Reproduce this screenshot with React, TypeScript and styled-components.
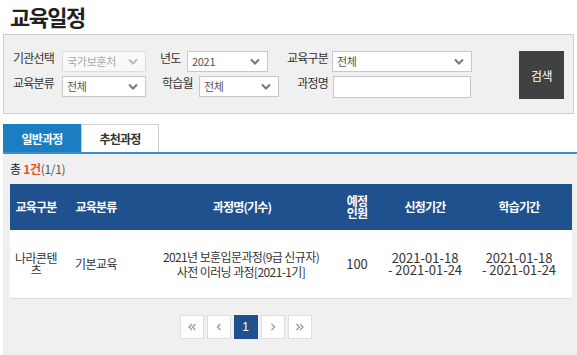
import React from "react";
import styled, { createGlobalStyle } from "styled-components";

const Global = createGlobalStyle`
  html, body { margin: 0; padding: 0; background: #fff; overflow: hidden; }
  body { font-family: "Noto Sans CJK KR", "Noto Sans", sans-serif; color: #333; }
  * { box-sizing: border-box; }
`;

const Page = styled.div`
  padding-left: 3px;
  width: 577px;
`;

const Title = styled.h1`
  margin: 0;
  padding: 2px 0 0 7px;
  height: 34px;
  font-size: 22px;
  line-height: 28px;
  font-weight: 700;
  letter-spacing: -1.6px;
  color: #222;
`;

const Panel = styled.div`
  display: flex;
  align-items: flex-start;
  justify-content: space-between;
  width: 571px;
  height: 80px;
  border: 1px solid #cfcfcf;
  background: #f0f0f0;
  padding: 16px 9px 0 9px;
`;

const Form = styled.div`
  display: flex;
  flex-direction: column;
  gap: 4px;
`;

const FormRow = styled.div`
  display: grid;
  grid-template-columns: 147px 123px auto;
  align-items: start;
`;

const Field = styled.div<{ $shift?: number; $gap?: number }>`
  display: flex;
  align-items: flex-start;
  gap: ${(p) => p.$gap ?? 5}px;
  padding-left: ${(p) => p.$shift ?? 0}px;
`;

const Label = styled.span<{ $w?: number; $right?: boolean }>`
  display: block;
  font-size: 12px;
  letter-spacing: -0.8px;
  line-height: 14px;
  color: #333;
  white-space: nowrap;
  ${(p) => (p.$w ? `width: ${p.$w}px;` : "")}
  text-align: ${(p) => (p.$right ? "right" : "left")};
`;

const SelectBox = styled.div<{ $w: number; $disabled?: boolean }>`
  width: ${(p) => p.$w}px;
  height: 21px;
  border: 1px solid ${(p) => (p.$disabled ? "#dcdcdc" : "#c8c8c8")};
  background: ${(p) => (p.$disabled ? "#f9f9f9" : "#fff")};
  color: ${(p) => (p.$disabled ? "#aaa" : "#555")};
  font-size: 11px;
  line-height: 19px;
  padding-left: 4px;
  display: flex;
  align-items: center;
  justify-content: space-between;
  padding-right: 7px;
  letter-spacing: -0.3px;
`;

const Chevron = styled.svg<{ $disabled?: boolean }>`
  width: 10px;
  height: 7px;
  stroke: ${(p) => (p.$disabled ? "#bbb" : "#777")};
  fill: none;
  stroke-width: 2;
`;

const TextInput = styled.div`
  width: 138px;
  height: 22px;
  border: 1px solid #c8c8c8;
  background: #fff;
`;

const SearchButton = styled.button`
  width: 45px;
  height: 48px;
  border: none;
  background: #414141;
  color: #fff;
  font-family: inherit;
  font-size: 12px;
  letter-spacing: -0.5px;
  padding: 0;
`;

const Tabs = styled.div`
  display: flex;
  margin-top: 10px;
  height: 30px;
  border-bottom: 2px solid #3a8ecb;
  width: 574px;
`;

const Tab = styled.div<{ $active?: boolean }>`
  width: 78px;
  height: 28px;
  display: flex;
  align-items: center;
  justify-content: center;
  font-size: 12px;
  font-weight: 700;
  letter-spacing: -0.8px;
  background: ${(p) => (p.$active ? "#1b7ec2" : "#fff")};
  color: ${(p) => (p.$active ? "#fff" : "#333")};
  border: ${(p) => (p.$active ? "none" : "1px solid #cfcfcf")};
  border-bottom: none;
`;

const Content = styled.div`
  background: #f0f0f0;
  width: 574px;
  height: 201px;
  padding: 6px 5px 0 7px;
`;

const Total = styled.div`
  font-size: 12px;
  line-height: 18px;
  height: 24px;
  letter-spacing: -0.3px;
  color: #555;
`;

const Strong = styled.strong`
  color: #e8531f;
  font-weight: 700;
`;

const Dark = styled.span`
  color: #222;
`;

const Table = styled.table`
  width: 562px;
  border-collapse: collapse;
  table-layout: fixed;
  background: #fff;
`;

const Th = styled.th<{ $w: number; $pl?: number }>`
  width: ${(p) => p.$w}px;
  height: 46px;
  background: #20518f;
  color: #fff;
  font-size: 12px;
  font-weight: 700;
  letter-spacing: -0.8px;
  line-height: 12px;
  text-align: center;
  padding: 0 0 0 ${(p) => p.$pl ?? 0}px;
`;

const Td = styled.td<{ $pl?: number; $num?: boolean; $lh?: number }>`
  height: 68px;
  text-align: center;
  vertical-align: middle;
  font-size: ${(p) => (p.$num ? 13 : 12)}px;
  line-height: ${(p) => p.$lh ?? 15}px;
  color: #333;
  letter-spacing: ${(p) => (p.$num ? "0" : "-0.6px")};
  padding: 0 2px 0 ${(p) => p.$pl ?? 2}px;
  border-bottom: 1px solid #dcdcdc;
`;

const Pager = styled.div`
  width: 471px;
  display: flex;
  justify-content: center;
  gap: 3px;
  margin-top: 16px;
`;

const PageBtn = styled.div<{ $active?: boolean }>`
  width: 24px;
  height: 24px;
  display: flex;
  align-items: center;
  justify-content: center;
  background: ${(p) => (p.$active ? "#20518f" : "#fff")};
  border: 1px solid ${(p) => (p.$active ? "#20518f" : "#dedede")};
  color: ${(p) => (p.$active ? "#fff" : "#888")};
  font-size: 12px;
  font-family: "Liberation Sans", sans-serif;
`;

const PagerIcon = styled.svg`
  width: 10px;
  height: 10px;
  fill: none;
  stroke: #999;
  stroke-width: 1.3;
`;

function Select({ w, value, disabled }: { w: number; value: string; disabled?: boolean }) {
  return (
    <SelectBox $w={w} $disabled={disabled}>
      <span>{value}</span>
      <Chevron $disabled={disabled} viewBox="0 0 10 7">
        <polyline points="1,1.5 5,5.5 9,1.5" />
      </Chevron>
    </SelectBox>
  );
}

export default function App() {
  return (
    <Page>
      <Global />
      <Title>교육일정</Title>
      <Panel>
        <Form>
          <FormRow>
            <Field>
              <Label $w={44}>기관선택</Label>
              <Select w={84} value="국가보훈처" disabled />
            </Field>
            <Field>
              <Label $w={22}>년도</Label>
              <Select w={81} value="2021" />
            </Field>
            <Field $gap={4}>
              <Label $w={45} $right>
                교육구분
              </Label>
              <Select w={140} value="전체" />
            </Field>
          </FormRow>
          <FormRow>
            <Field>
              <Label $w={44}>교육분류</Label>
              <Select w={84} value="전체" />
            </Field>
            <Field $shift={2} $gap={4}>
              <Label $w={33}>학습월</Label>
              <Select w={80} value="전체" />
            </Field>
            <Field $gap={5}>
              <Label $w={45} $right>
                과정명
              </Label>
              <TextInput />
            </Field>
          </FormRow>
        </Form>
        <SearchButton>검색</SearchButton>
      </Panel>
      <Tabs>
        <Tab $active>일반과정</Tab>
        <Tab>추천과정</Tab>
      </Tabs>
      <Content>
        <Total>
          <Dark>총 </Dark>
          <Strong>1건</Strong>(1/1)
        </Total>
        <Table>
          <thead>
            <tr>
              <Th $w={52}>교육구분</Th>
              <Th $w={68}>교육분류</Th>
              <Th $w={200} $pl={24}>
                과정명(기수)
              </Th>
              <Th $w={54}>
                예정
                <br />
                인원
              </Th>
              <Th $w={82}>신청기간</Th>
              <Th $w={106}>학습기간</Th>
            </tr>
          </thead>
          <tbody>
            <tr>
              <Td $lh={12}>나라콘텐츠</Td>
              <Td>기본교육</Td>
              <Td $pl={24}>
                2021년 보훈입문과정(9급 신규자)
                <br />
                사전 이러닝 과정[2021-1기]
              </Td>
              <Td $num>100</Td>
              <Td $num $lh={12}>
                2021-01-18
                <br />- 2021-01-24
              </Td>
              <Td $num $lh={12}>
                2021-01-18
                <br />- 2021-01-24
              </Td>
            </tr>
          </tbody>
        </Table>
        <Pager>
          <PageBtn>
            <PagerIcon viewBox="0 0 10 10">
              <polyline points="5,2 2,5 5,8" />
              <polyline points="8.5,2 5.5,5 8.5,8" />
            </PagerIcon>
          </PageBtn>
          <PageBtn>
            <PagerIcon viewBox="0 0 10 10">
              <polyline points="6.5,2 3.5,5 6.5,8" />
            </PagerIcon>
          </PageBtn>
          <PageBtn $active>1</PageBtn>
          <PageBtn>
            <PagerIcon viewBox="0 0 10 10">
              <polyline points="3.5,2 6.5,5 3.5,8" />
            </PagerIcon>
          </PageBtn>
          <PageBtn>
            <PagerIcon viewBox="0 0 10 10">
              <polyline points="1.5,2 4.5,5 1.5,8" />
              <polyline points="5,2 8,5 5,8" />
            </PagerIcon>
          </PageBtn>
        </Pager>
      </Content>
    </Page>
  );
}
